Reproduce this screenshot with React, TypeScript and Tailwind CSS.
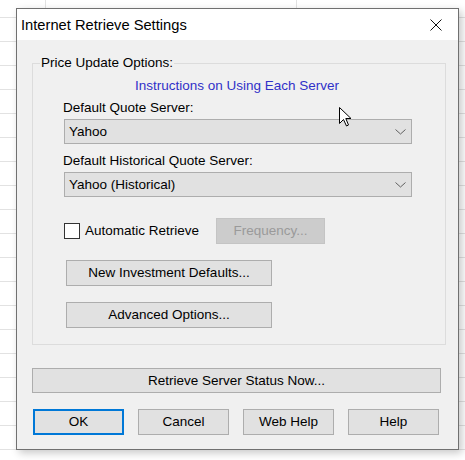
import React from "react";

/**
 * Internet Retrieve Settings dialog over a spreadsheet
 */

const ROWS = Array.from({ length: 19 }, (_, i) => i);

function Sheet() {
  return (
    <div className="flex flex-col">
      {ROWS.map((i) => (
        <div
          key={i}
          className={`flex border-b border-[#e2e2e2] ${i === 0 ? "h-[18px]" : "h-[24px]"}`}
        >
          <div className="w-[46px] border-r border-[#e2e2e2]" />
          <div className="w-[251px] border-r border-[#e2e2e2]" />
          <div className="flex-1" />
        </div>
      ))}
    </div>
  );
}

function Chevron() {
  return (
    <svg width="11" height="6" viewBox="0 0 11 6" fill="none">
      <polyline points="0.5,0.5 5.5,5 10.5,0.5" stroke="#606060" strokeWidth="1" />
    </svg>
  );
}

function Select({ value }: { value: string }) {
  return (
    <div className="ml-[31px] flex h-[25px] w-[348px] items-center justify-between border border-[#adadad] bg-[#e1e1e1] pl-[4px] pr-[5px]">
      <span className="leading-[16px]">{value}</span>
      <Chevron />
    </div>
  );
}

function Btn({
  children,
  className = "",
}: {
  children: React.ReactNode;
  className?: string;
}) {
  return (
    <div
      className={`flex items-center justify-center border border-[#adadad] bg-[#e1e1e1] leading-[16px] ${className}`}
    >
      {children}
    </div>
  );
}

function Cursor() {
  return (
    <svg
      className="absolute left-[339px] top-[107px]"
      width="13"
      height="20"
      viewBox="0 0 13 20"
    >
      <path
        d="M0.5 0.5 L0.5 16.5 L4.5 12.5 L7.5 19 L9.5 18 L6.8 11.5 L12 11.5 Z"
        fill="#fff"
        stroke="#000"
        strokeWidth="1"
        strokeLinejoin="miter"
      />
    </svg>
  );
}

export default function App() {
  return (
    <div className="relative h-[460px] w-[465px] overflow-hidden bg-white font-['Liberation_Sans',Arial,sans-serif] text-[13.5px] text-black">
      <Sheet />

      {/* 대화상자 */}
      <div className="absolute left-[16px] top-[8px] flex h-[442px] w-[443px] flex-col border border-[#707070] bg-[#f0f0f0] shadow-[3px_3px_8px_rgba(0,0,0,0.22)]">
        <div className="flex h-[31px] items-center justify-between bg-white">
          <span className="pl-[4px] text-[14.7px] leading-[18px]">
            Internet Retrieve Settings
          </span>
          <div className="flex h-full w-[44px] items-center justify-center">
            <svg width="12" height="12" viewBox="0 0 12 12">
              <path d="M0.5 0.5 L11.5 11.5 M11.5 0.5 L0.5 11.5" stroke="#111" strokeWidth="1" />
            </svg>
          </div>
        </div>

        <fieldset className="ml-[15px] mt-[15px] flex w-[414px] flex-col border border-[#dcdcdc] pb-[16px]">
          <legend className="ml-[7px] px-[1px] leading-[16px]">Price Update Options:</legend>
          <div className="mt-[7px] pl-[102px] leading-[16px] text-[#3030c8]">
            Instructions on Using Each Server
          </div>
          <div className="mt-[6px] pl-[30px] leading-[16px]">Default Quote Server:</div>
          <div className="mt-[3px]">
            <Select value="Yahoo" />
          </div>
          <div className="mt-[9px] pl-[30px] leading-[16px]">Default Historical Quote Server:</div>
          <div className="mt-[3px]">
            <Select value="Yahoo (Historical)" />
          </div>

          <div className="ml-[31px] mt-[21px] flex h-[26px] items-center">
            <label className="flex w-[152px] items-center gap-[5px]">
              <span className="h-[16px] w-[16px] border border-[#333] bg-white" />
              <span className="leading-[16px]">Automatic Retrieve</span>
            </label>
            <div className="flex h-[26px] w-[109px] items-center justify-center border border-[#c4c4c4] bg-[#cccccc] leading-[16px] text-[#9a9a9a]">
              Frequency...
            </div>
          </div>

          <Btn className="ml-[33px] mt-[16px] h-[26px] w-[206px]">New Investment Defaults...</Btn>
          <Btn className="ml-[33px] mt-[16px] h-[26px] w-[206px]">Advanced Options...</Btn>
        </fieldset>

        <Btn className="ml-[15px] mt-[23px] h-[25px] w-[409px]">Retrieve Server Status Now...</Btn>

        <div className="ml-[16px] mt-[16px] flex gap-[14px]">
          <div className="flex h-[26px] w-[91px] items-center justify-center border-2 border-[#0078d7] bg-[#e1e1e1] leading-[16px]">
            OK
          </div>
          <Btn className="h-[26px] w-[91px]">Cancel</Btn>
          <Btn className="h-[26px] w-[91px]">Web Help</Btn>
          <Btn className="h-[26px] w-[91px]">Help</Btn>
        </div>
      </div>

      <Cursor />
    </div>
  );
}
